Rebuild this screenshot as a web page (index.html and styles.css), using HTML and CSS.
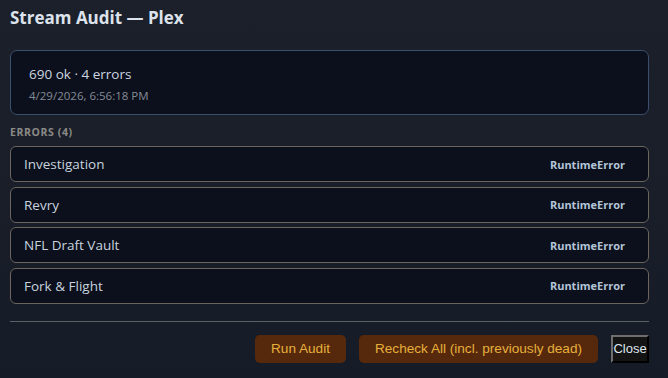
FILE: index.html
```html
<!DOCTYPE html>
<html>
<head>
<meta charset="utf-8">
<link rel="stylesheet" href="styles.css">
</head>
<body>
<div class="dialog">
  <h2 class="title">Stream Audit — Plex</h2>
  <div class="summary">
    <div class="summary-main">690 ok · 4 errors</div>
    <div class="summary-date">4/29/2026, 6:56:18 PM</div>
  </div>
  <div class="section-label">Errors (4)</div>
  <div class="error-list">
    <div class="error-row"><span class="error-name">Investigation</span><span class="error-type">RuntimeError</span></div>
    <div class="error-row"><span class="error-name">Revry</span><span class="error-type">RuntimeError</span></div>
    <div class="error-row"><span class="error-name">NFL Draft Vault</span><span class="error-type">RuntimeError</span></div>
    <div class="error-row"><span class="error-name">Fork &amp; Flight</span><span class="error-type">RuntimeError</span></div>
  </div>
  <div class="divider"></div>
  <div class="actions">
    <button class="btn-primary">Run Audit</button>
    <button class="btn-primary">Recheck All (incl. previously dead)</button>
    <button class="btn-close">Close</button>
  </div>
</div>
</body>
</html>
```
FILE: styles.css
```css
html, body {
  margin: 0;
  height: 100%;
}
body {
  background: linear-gradient(#1c202b, #161c27);
  font-family: "Open Sans", "Noto Sans", sans-serif;
  color: #cfd6e0;
}
.dialog {
  padding: 6px 19px 0 10px;
}
.title {
  margin: 0;
  font-size: 17px;
  line-height: 24px;
  font-weight: 700;
  color: #dde3ec;
}
.summary {
  margin-top: 20px;
  height: 65px;
  box-sizing: border-box;
  border: 1px solid #3b4f6d;
  border-radius: 7px;
  background: #0b101c;
  padding: 13px 18px 0;
}
.summary-main {
  font-size: 13.5px;
  line-height: 20px;
  color: #cdd5e0;
}
.summary-date {
  font-size: 11.5px;
  line-height: 18px;
  margin-top: 3px;
  color: #858b95;
}
.section-label {
  margin-top: 10px;
  font-size: 10.5px;
  line-height: 14px;
  font-weight: 700;
  letter-spacing: 0.6px;
  text-transform: uppercase;
  color: #8c8a86;
}
.error-list {
  margin-top: 7px;
  display: flex;
  flex-direction: column;
  gap: 4.67px;
}
.error-row {
  height: 36px;
  box-sizing: border-box;
  border: 1px solid #6b655d;
  border-radius: 6px;
  background: #0b101c;
  display: flex;
  align-items: center;
  justify-content: space-between;
  padding: 0 23px 0 13px;
}
.error-name {
  font-size: 13.5px;
  color: #c8d3df;
}
.error-type {
  font-size: 11px;
  font-weight: 700;
  color: #b3c4d8;
}
.divider {
  margin-top: 17px;
  height: 1px;
  background: #5b5f66;
}
.actions {
  margin-top: 13px;
  display: flex;
  justify-content: flex-end;
  align-items: center;
}
.btn-primary {
  height: 28px;
  border: none;
  border-radius: 5px;
  background: #56290c;
  color: #e6b03c;
  font-family: "Liberation Sans", Arial, sans-serif;
  font-size: 13.6px;
  padding: 0 16px;
  margin-left: 13px;
}
.btn-close {
  height: 28px;
  width: 38px;
  margin-left: 13px;
  padding: 0;
  border: 2px outset #6e6e6e;
  border-right-color: #1a1a1a;
  border-bottom-color: #1a1a1a;
  background: #141414;
  color: #dfe6ee;
  font-family: "Liberation Sans", Arial, sans-serif;
  font-size: 13px;
}
```
